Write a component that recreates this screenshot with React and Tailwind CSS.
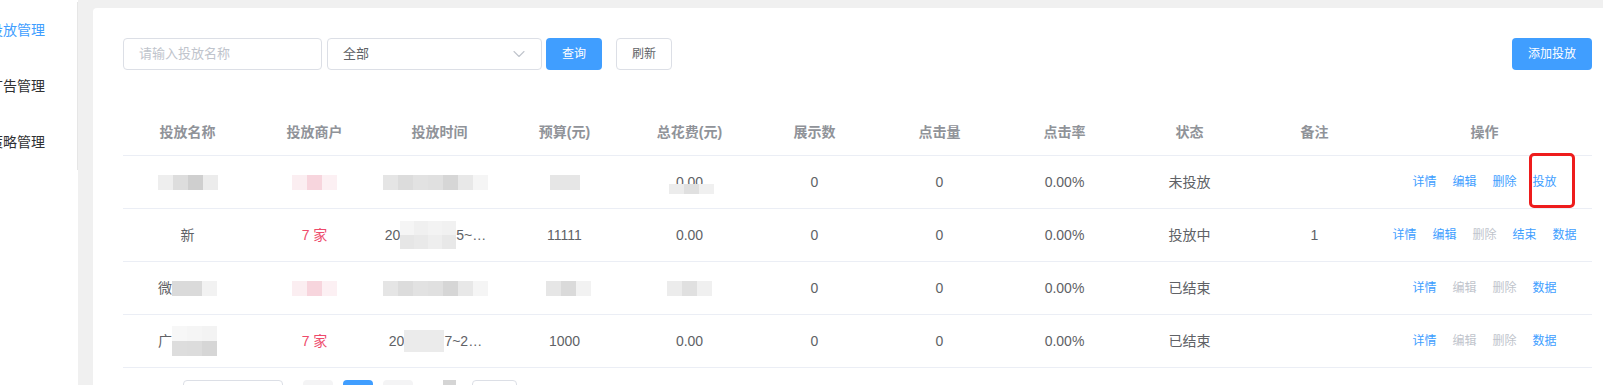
import { ChevronDown } from 'lucide-react';

const cols = 'grid grid-cols-[129px_125px_125px_125px_125px_125px_125px_125px_125px_125px_1fr]';

// pixelated privacy blocks (as they appear in the shot)
function Blur({ rows, w = 15, h = 15, className = '' }) {
    return (
        <span className={`inline-flex flex-col align-middle ${className}`}>
            {rows.map((r, i) => (
                <span key={i} className="flex">
                    {r.map((c, j) => (
                        <span key={j} style={{ background: c, width: w, height: h }} />
                    ))}
                </span>
            ))}
        </span>
    );
}

const timeBlur = [['#e5e5e5', '#dcdcdc', '#e2e2e2', '#e0e0e0', '#d6d6d6', '#e8e8e8', '#f5f5f5']];
const pinkBlur = [['#fbeef1', '#f7d5dd', '#fcf0f3']];
const costBlur = [['#ececec', '#e0e0e0', '#f0f0f0']];

function Ops({ items }) {
    return (
        <div className="flex items-center justify-center gap-4 text-xs">
            {items.map(([label, on]) => (
                <span key={label} className={on ? 'text-[#409eff]' : 'text-[#c0c4cc]'}>{label}</span>
            ))}
        </div>
    );
}

function Row({ cells }) {
    return (
        <div className={`${cols} h-[53px] border-b border-[#ebeef5] text-sm text-[#606266]`}>
            {cells.map((c, i) => (
                <div key={i} className="flex items-center justify-center whitespace-nowrap">{c}</div>
            ))}
        </div>
    );
}

export default function App() {
    const headers = ['投放名称', '投放商户', '投放时间', '预算(元)', '总花费(元)', '展示数', '点击量', '点击率', '状态', '备注', '操作'];

    const rows = [
        [
            <Blur rows={[['#eeeeee', '#dddddd', '#cfcfcf', '#ececec']]} />,
            <Blur rows={pinkBlur} />,
            <Blur rows={timeBlur} className="-ml-2" />,
            <Blur rows={[['#e6e6e6', '#e6e6e6']]} />,
            <span className="relative">
                0.00
                <span className="absolute left-[-7px] top-[6px]"><Blur rows={costBlur} h={10} /></span>
            </span>,
            '0', '0', '0.00%', '未投放', '',
            <Ops items={[['详情', 1], ['编辑', 1], ['删除', 1], ['投放', 1]]} />,
        ],
        [
            '新',
            <span className="text-[#ee4a6b]">7 家</span>,
            <span className="flex items-center -ml-2">20<Blur rows={[['#f5f5f5', '#f0f0f0', '#f3f3f3', '#f1f1f1'], ['#e6e6e6', '#e9e9e9', '#eeeeee', '#e8e8e8']]} w={14} h={14} />5~…</span>,
            '11111', '0.00', '0', '0', '0.00%', '投放中', '1',
            <Ops items={[['详情', 1], ['编辑', 1], ['删除', 0], ['结束', 1], ['数据', 1]]} />,
        ],
        [
            <span className="flex items-center">微<Blur rows={[['#dadada', '#dadada', '#f2f2f2']]} /></span>,
            <Blur rows={pinkBlur} />,
            <Blur rows={timeBlur} className="-ml-2" />,
            <Blur rows={[['#e6e6e6', '#dadada', '#f2f2f2']]} className="ml-2" />,
            <Blur rows={costBlur} />,
            '0', '0', '0.00%', '已结束', '',
            <Ops items={[['详情', 1], ['编辑', 0], ['删除', 0], ['数据', 1]]} />,
        ],
        [
            <span className="flex items-center">广<Blur rows={[['#f7f7f7', '#f5f5f5', '#f3f3f3'], ['#dddddd', '#dcdcdc', '#d6d6d6']]} /></span>,
            <span className="text-[#ee4a6b]">7 家</span>,
            <span className="flex items-center -ml-2">20<span className="w-[40px] h-[22px] bg-[#ebebeb]" />7~2…</span>,
            '1000', '0.00', '0', '0', '0.00%', '已结束', '',
            <Ops items={[['详情', 1], ['编辑', 0], ['删除', 0], ['数据', 1]]} />,
        ],
    ];

    return (
        <div className="h-[385px] w-[1603px] overflow-hidden flex bg-[#f0f0f0] font-['Liberation_Sans','Noto_Sans_CJK_SC',sans-serif]">
            {/* sidebar, scrolled a bit to the right */}
            <aside className="w-[78px] shrink-0 bg-white overflow-hidden">
                <div className="mt-[2px] h-[168px] border-r border-[#e6e6e6] text-sm text-[#303133]">
                    <div className="h-[56px] flex items-center -ml-[11px] whitespace-nowrap text-[#409eff]">投放管理</div>
                    <div className="h-[56px] flex items-center -ml-[11px] whitespace-nowrap">广告管理</div>
                    <div className="h-[56px] flex items-center -ml-[11px] whitespace-nowrap">策略管理</div>
                </div>
            </aside>

            <main className="flex-1 pl-[15px] pt-2">
                <div className="relative h-full bg-white rounded-tl-sm pt-[30px] pl-[30px] pr-[11px]">
                    {/* toolbar */}
                    <div className="flex items-center h-8">
                        <div className="w-[199px] h-8 border border-[#dcdfe6] rounded flex items-center px-[15px] text-[13px] text-[#c0c4cc]">
                            请输入投放名称
                        </div>
                        <div className="ml-[5px] w-[215px] h-8 border border-[#dcdfe6] rounded flex items-center justify-between pl-[15px] pr-[12px] text-[13px] text-[#606266]">
                            <span>全部</span>
                            <ChevronDown size={20} strokeWidth={1.3} className="text-[#c0c4cc]" />
                        </div>
                        <button className="ml-1 w-[56px] h-8 rounded bg-[#409eff] text-white text-xs">查询</button>
                        <button className="ml-[14px] w-[56px] h-8 rounded border border-[#dcdfe6] bg-white text-[#606266] text-xs">刷新</button>
                        <button className="ml-auto w-[80px] h-8 rounded bg-[#409eff] text-white text-xs">添加投放</button>
                    </div>

                    {/* table */}
                    <div className="mt-[38px]">
                        <div className={`${cols} h-[48px] border-b border-[#ebeef5] text-sm font-bold text-[#909399]`}>
                            {headers.map((h) => (
                                <div key={h} className="flex items-center justify-center">{h}</div>
                            ))}
                        </div>
                        {rows.map((r, i) => <Row key={i} cells={r} />)}
                    </div>

                    {/* pagination (cut off by the window) */}
                    <div className="mt-3 ml-[60px] flex items-start h-[28px]">
                        <div className="w-[100px] h-[28px] border border-[#dcdfe6] rounded" />
                        <div className="ml-5 w-[30px] h-[28px] bg-[#f4f4f5] rounded-sm" />
                        <div className="ml-[10px] w-[30px] h-[28px] bg-[#409eff] rounded-sm" />
                        <div className="ml-[10px] w-[30px] h-[28px] bg-[#f4f4f5] rounded-sm" />
                        <div className="ml-[30px] w-[13px] h-[28px] bg-[#d5d5d5]" />
                        <div className="ml-4 w-[45px] h-[28px] border border-[#dcdfe6] rounded" />
                    </div>

                    {/* red annotation around 投放 */}
                    <div className="absolute left-[1436px] top-[145px] w-[46px] h-[55px] border-[3px] border-[#ee1c1c] rounded-[5px]" />
                </div>
            </main>
        </div>
    );
}
